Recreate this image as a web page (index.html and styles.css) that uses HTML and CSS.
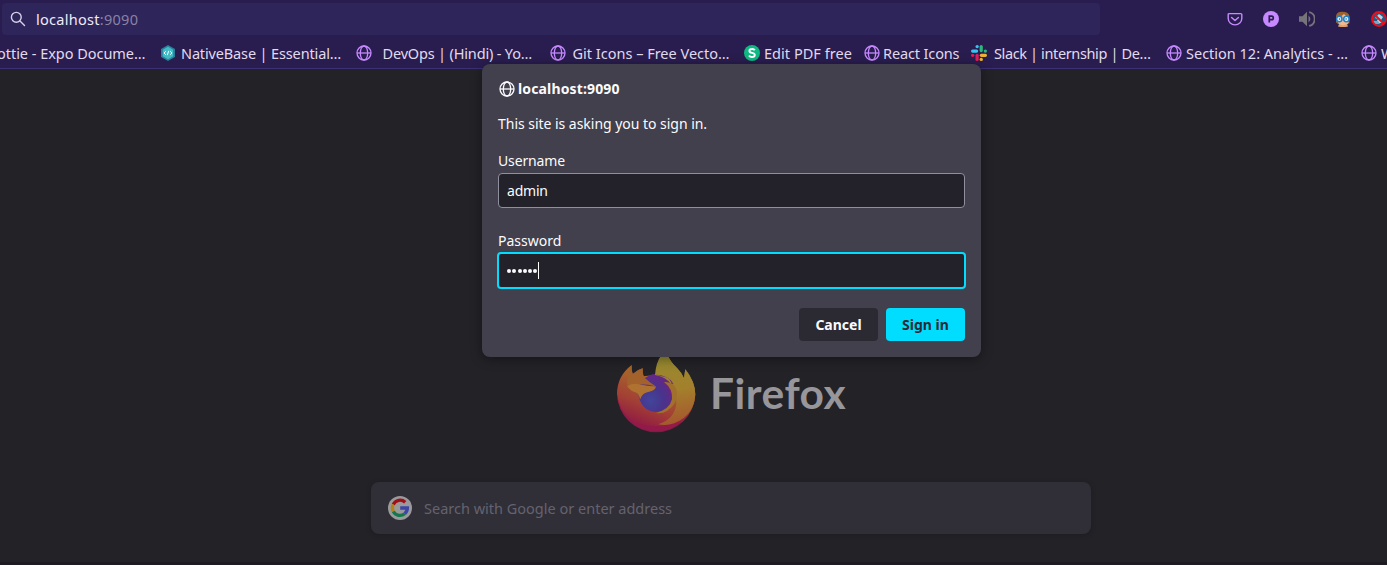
FILE: index.html
```html
<!DOCTYPE html>
<html lang="en">
<head>
<meta charset="utf-8">
<title>New Tab</title>
<link rel="stylesheet" href="styles.css">
</head>
<body>
<svg class="defs" width="0" height="0">
  <symbol id="globe" viewBox="0 0 16 16">
    <g fill="none" stroke="currentColor" stroke-width="1.3">
      <circle cx="8" cy="8" r="7"/>
      <ellipse cx="8" cy="8" rx="3.7" ry="7"/>
      <path d="M1 8h14"/>
    </g>
  </symbol>
</svg>

<header class="chrome">
  <div class="toolbar">
    <div class="urlbar">
      <svg class="search-icon" viewBox="0 0 16 16"><g fill="none" stroke="currentColor" stroke-width="1.4" stroke-linecap="round"><circle cx="6.3" cy="6.3" r="4.9"/><path d="M10 10l4.500 4.500"/></g></svg>
      <span class="url">localhost<span class="port">:9090</span></span>
    </div>
    <div class="extensions">
      <svg viewBox="0 0 16 16"><path d="M2.2 2.6h11.6q1 0 1 1v4a6.8 6.3 0 0 1-13.6 0v-4q0-1 1-1zM4.6 6.4l3.4 3.2 3.4-3.2" fill="none" stroke="#c689ff" stroke-width="1.4" stroke-linecap="round" stroke-linejoin="round"/></svg>
      <svg viewBox="0 0 16 16"><circle cx="8" cy="8" r="8" fill="#c689ff"/><path d="M6.300 11.500V5.200h2.300a1.700 1.700 0 0 1 0 3.400H6.300" fill="none" stroke="#2a1d4f" stroke-width="1.700"/></svg>
      <svg viewBox="0 0 16 16"><path d="M0 5.200h3.500L8 .8v14.400L3.500 10.800H0z" fill="#77737a"/><path d="M9.500 4.500q3.800 3.500 0 7z" fill="#77737a"/><path d="M10.200 1.100a7.100 7.100 0 0 1 0 13.800" fill="none" stroke="#77737a" stroke-width="1.700"/></svg>
      <svg viewBox="0 0 16 16"><path d="M1 11.500V5Q2 .6 7 .8q6-.3 7.500 4.200v7.500h-3L3 13z" fill="#9b642f"/><path d="M3 6q4-.5 6-3 2 2.600 4.500 3v6L11 14.500l-3 1L5 14.500l-2-3z" fill="#f2b98a"/><path d="M4 13l4 1.500 4-1.500 1 2.500q-5 1-10 0z" fill="#e0a070"/><g fill="#e8f8ff" stroke="#1d81ce" stroke-width="1.500"><circle cx="4.300" cy="8" r="2.700"/><circle cx="11.400" cy="8" r="2.700"/></g><circle cx="4.600" cy="8" r=".8" fill="#1d5d99"/><circle cx="11.100" cy="8" r=".8" fill="#1d5d99"/></svg>
      <svg viewBox="0 0 16 16"><circle cx="8" cy="8" r="7" fill="#265a87"/><path d="M4 7l4-4 4 3-2 3 2 3H5l2-4z" fill="#b8d5e6"/><path d="M2 10h5l2 3H4z" fill="#72a7c8"/><circle cx="8" cy="8" r="7" fill="none" stroke="#f30c16" stroke-width="1.900"/><path d="M3 3l10 10" stroke="#f30c16" stroke-width="2"/></svg>
    </div>
  </div>
  <nav class="bookmarks">
    <a class="bookmark bm-expo"><span>ottie - Expo Docume…</span></a>
    <a class="bookmark bm-native"><svg viewBox="0 0 16 16"><path d="M8 0l7 4v8l-7 4-7-4V4z" fill="#2b7f9d"/><path d="M8 1.800l5.200 3v6.400L8 14.200l-5.200-3V4.800z" fill="#3fbcc6"/><path d="M5.800 6.300L4 8l1.800 1.700M10.200 6.300L12 8l-1.800 1.700M8.700 5.800l-1.400 4.400" fill="none" stroke="#fff"/></svg><span>NativeBase | Essential…</span></a>
    <a class="bookmark bm-devops"><svg><use href="#globe"/></svg><span>DevOps | (Hindi) - Yo…</span></a>
    <a class="bookmark bm-git"><svg><use href="#globe"/></svg><span>Git Icons – Free Vecto…</span></a>
    <a class="bookmark bm-pdf"><svg viewBox="0 0 16 16"><circle cx="8" cy="8" r="8" fill="#0eb982"/><path d="M10.800 5.300Q10 3.900 8 4 5.400 4 5.400 5.900q0 1.500 2.600 2 2.800.5 2.800 2.200Q10.800 12 8 12q-2.200 0-3-1.500" fill="none" stroke="#fff" stroke-width="1.900"/></svg><span>Edit PDF free</span></a>
    <a class="bookmark bm-react"><svg><use href="#globe"/></svg><span>React Icons</span></a>
    <a class="bookmark bm-slack"><svg viewBox="0 0 16 16"><g fill="none" stroke-width="3.200" stroke-linecap="round"><path d="M1.600 6.100h4" stroke="#36c5f0"/><path d="M6.100 1.600h.1" stroke="#36c5f0"/><path d="M10.200 1.600v4" stroke="#2eb67d"/><path d="M14.400 6.100h-.1" stroke="#2eb67d"/><path d="M14.400 10.300h-4" stroke="#ecb22e"/><path d="M10.200 14.400h.1" stroke="#ecb22e"/><path d="M6.100 14.400v-4" stroke="#e01e5a"/><path d="M1.600 10.300h.1" stroke="#e01e5a"/></g></svg><span>Slack | internship | De…</span></a>
    <a class="bookmark bm-section"><svg><use href="#globe"/></svg><span>Section 12: Analytics - …</span></a>
    <a class="bookmark bm-last"><svg><use href="#globe"/></svg><span>W</span></a>
  </nav>
</header>

<main class="newtab">
  <div class="brand">
    <svg class="firefox" viewBox="0 0 80 80">
      <defs>
        <linearGradient id="body" x1=".75" y1="0" x2=".35" y2="1"><stop offset="0" stop-color="#a08a2b"/><stop offset=".35" stop-color="#a8682a"/><stop offset=".7" stop-color="#a23f35"/><stop offset="1" stop-color="#8e1545"/></linearGradient>
        <linearGradient id="flame" x1=".4" y1="0" x2=".5" y2="1"><stop offset="0" stop-color="#958a30"/><stop offset=".5" stop-color="#a4802c"/><stop offset="1" stop-color="#a5562e"/></linearGradient>
        <linearGradient id="rim" x1="1" y1="0" x2="0" y2=".6"><stop offset="0" stop-color="#9c4a30"/><stop offset=".5" stop-color="#921549"/><stop offset="1" stop-color="#931a4b"/></linearGradient>
        <radialGradient id="orb" cx=".35" cy=".7" r=".75"><stop offset="0" stop-color="#41459a"/><stop offset=".5" stop-color="#49338c"/><stop offset="1" stop-color="#6a2582"/></radialGradient>
      </defs>
      <path d="M15.700 10q-.5 5 1 9 5-4.500 10-5.700v8L40 20q1-13 5.500-20h6q3 7 9.500 13 5 5 7 10.300l1.300-9q9.700 12 10 25A39.200 39.200 0 0 1 1 39Q1 21 15.700 10z" fill="url(#body)"/>
      <path d="M1 40q6 31 38 31 31 0 40.300-31A39.200 39.200 0 0 1 1 40z" fill="url(#rim)" opacity=".85"/>
      <ellipse cx="40" cy="38" rx="17.500" ry="19" fill="url(#orb)"/>
      <path d="M39 20q1-13 6.500-20h6q3 7 9.500 13 5 5 7 10.300l1.300-9q9.700 12 10 25-1 21-21 29-8 3-16 1 16-5 18-20Q61 24 39 20z" fill="url(#flame)"/>
      <path d="M39 19.500q15 1 18.500 9.500l-9-2q5 7 7 17 4-13-3-21z" fill="#6d2681"/>
      <path d="M48 27q11-1 13 10 1 12-10 19-5 3-11 2 14-4 16-14 1-10-8-17z" fill="#a1702c"/>
      <path d="M15.700 10q-.5 5 1 9 5-4.500 10-5.700-.5 6 2.500 10 4 4 10.800 8.200Q28 28 11 30 11 19 15.700 10z" fill="#a3612c"/>
      <path d="M11 31q6-3.500 13-1.500 7 1.700 16 2-1 4-6 5-8 1-10 8-1-6-4-7-5-1-9-6.500z" fill="#af7230"/>
    </svg>
    <span class="wordmark">Firefox</span>
  </div>
  <div class="searchbox">
    <svg class="google" viewBox="0 0 24 24"><circle cx="12" cy="12" r="12" fill="#9a999c"/><g fill="none" stroke-width="3.300"><path d="M17.200 6.200A7.500 7.500 0 0 0 5.300 8.500" stroke="#a00f16"/><path d="M5.300 8.500a7.500 7.500 0 0 0 0 7" stroke="#b48216"/><path d="M5.300 15.500A7.500 7.500 0 0 0 16.700 17.700" stroke="#16784a"/><path d="M16.700 17.700q2.700-2.300 2.700-5.700h-7.200" stroke="#3d45a6"/></g></svg>
    <span class="placeholder">Search with Google or enter address</span>
  </div>
</main>

<section class="dialog">
  <div class="origin"><svg><use href="#globe"/></svg><span>localhost:9090</span></div>
  <p class="message">This site is asking you to sign in.</p>
  <label class="user-label">Username</label>
  <div class="field">admin</div>
  <label class="password-label">Password</label>
  <div class="field focused"><i></i><i></i><i></i><i></i><i></i><i></i><b class="caret"></b></div>
  <div class="buttons">
    <button class="cancel">Cancel</button>
    <button class="signin">Sign in</button>
  </div>
</section>
</body>
</html>
```
FILE: styles.css
```css
* { box-sizing: border-box; }
body {
  margin: 0;
  width: 1387px;
  height: 565px;
  overflow: hidden;
  position: relative;
  display: flex;
  flex-direction: column;
  background: #232227;
  font: 14.5px/20px "Noto Sans", "Open Sans", sans-serif;
}
svg { flex: none; display: block; }
.defs { position: absolute; }

.chrome { height: 69px; flex: none; background: #291d4f; border-bottom: 1px solid #3b3075; }
.toolbar { height: 38px; display: flex; padding: 3px 0 0 2px; }
.urlbar {
  width: 1098px; height: 32px; flex: none;
  display: flex; align-items: center;
  padding-left: 8px;
  border-radius: 4px;
  background: #2e255b;
}
.search-icon { width: 16px; height: 16px; color: #d9d0e8; }
.url { margin-left: 10px; color: #f0eaf8; letter-spacing: .28px; }
.port { color: #8b81a5; }
.extensions { display: flex; gap: 20px; padding: 8px 0 0 127px; }
.extensions svg { width: 16px; height: 16px; }

.bookmarks { display: flex; height: 30px; overflow: hidden; color: #e2dbed; }
.bookmark { display: flex; align-items: center; flex: none; white-space: nowrap; gap: 5px; }
.bookmark svg { width: 16px; height: 16px; color: #c689ff; }
.bm-expo { width: 160px; }
.bm-expo span { margin-left: -3px; letter-spacing: -.03px; }
.bm-native { width: 195.500px; letter-spacing: -.14px; }
.bm-devops { width: 194px; gap: 11px; letter-spacing: -.17px; }
.bm-git { width: 194.500px; gap: 7px; }
.bm-pdf { width: 120px; gap: 4px; letter-spacing: .04px; }
.bm-react { width: 107px; gap: 3px; letter-spacing: -.13px; }
.bm-slack { width: 195px; gap: 7px; letter-spacing: -.37px; }
.bm-section { width: 195px; gap: 4px; }
.bm-last { gap: 4px; }

.newtab { flex: 1; display: flex; flex-direction: column; align-items: flex-start; padding-top: 286px; border-bottom: 3px solid #1f1b24; }
.brand { display: flex; align-items: center; gap: 14px; height: 80px; margin-left: 616px; }
.firefox { width: 80px; height: 80px; }
.wordmark { margin-top: -4px; font: 700 42.500px/50px Lato, sans-serif; letter-spacing: .5px; color: #97969b; }
.searchbox {
  width: 720px; height: 52px; margin: 47px 0 0 371px;
  display: flex; align-items: center; gap: 12px;
  padding-left: 17px;
  border-radius: 8px;
  background: #302f37;
  box-shadow: 0 1px 4px #1d1c20;
  color: #65626f;
}
.google { width: 24px; height: 24px; }

.dialog {
  position: absolute; left: 482px; top: 64px;
  width: 499px; height: 293px;
  display: flex; flex-direction: column;
  padding: 15px 16px 16px;
  border-radius: 8px;
  background: #42404c;
  box-shadow: 0 2px 12px rgba(0,0,0,.4);
  color: #fbfbfe;
  font-size: 14px;
}
.origin { display: flex; align-items: center; gap: 3px; height: 20px; font-weight: 700; letter-spacing: .14px; }
.origin svg { width: 16px; height: 16px; margin-left: 1px; }
.message { margin: 15px 0 0; letter-spacing: -.03px; }
.user-label { margin-top: 17px; letter-spacing: -.15px; }
.field {
  height: 35px; margin-top: 2px;
  display: flex; align-items: center;
  padding: 0 8px;
  border: 1px solid #8f8f9d;
  border-radius: 4px;
  background: #23222b;
  letter-spacing: -.2px;
}
.password-label { margin-top: 23px; }
.focused { height: 37px; margin: 1px -1px 0; border: 2px solid #00ddff; gap: 1.300px; }
.focused i { width: 4px; height: 4px; border-radius: 50%; background: #fbfbfe; }
.caret { width: 1px; height: 17px; background: #fff; margin-left: -1px; }
.buttons { display: flex; justify-content: flex-end; gap: 8px; margin-top: 19px; }
.buttons button {
  width: 79px; height: 33px; padding: 0;
  border: 0; border-radius: 4px;
  font: 700 14px/20px "Noto Sans", sans-serif;
}
.cancel { background: #2b2a33; color: #fbfbfe; }
.signin { background: #00ddff; color: #2b2a33; }
```
